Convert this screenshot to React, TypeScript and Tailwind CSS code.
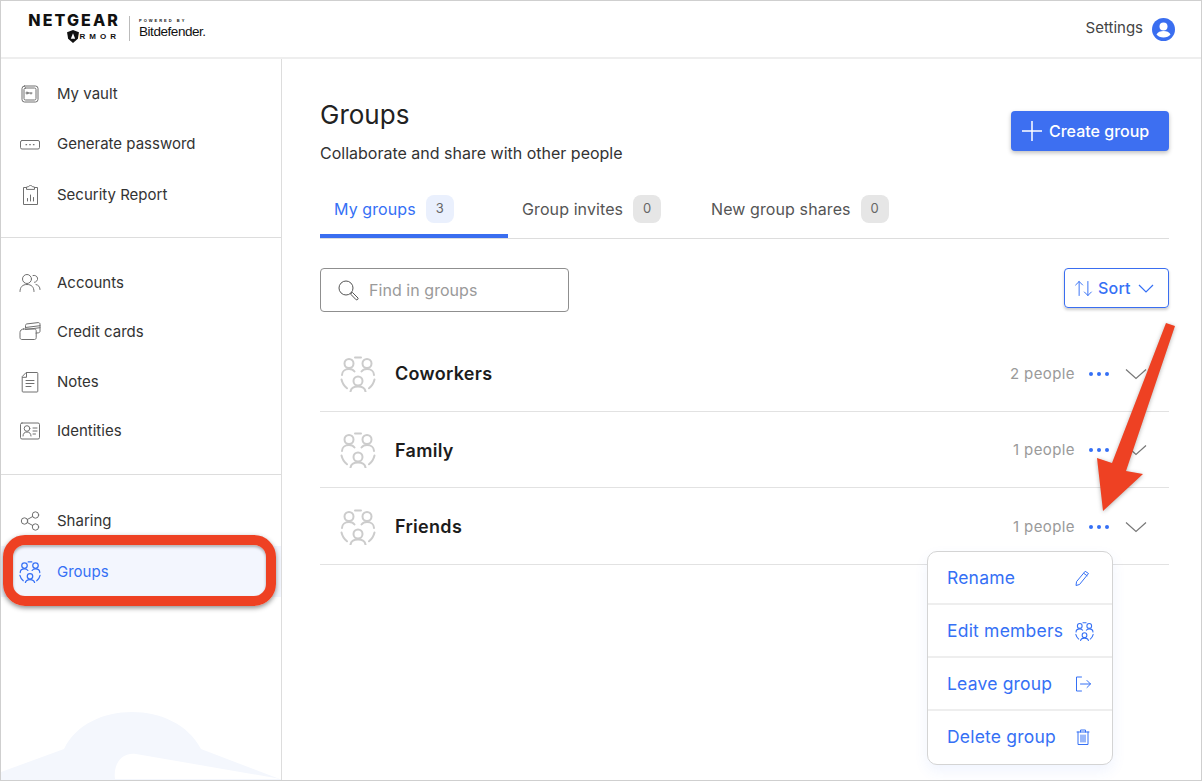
import type { ReactNode } from "react";
import { ArrowUpDown } from "lucide-react";

function Ico({ children, size = 22, view = 22, className = "" }: { children: ReactNode; size?: number; view?: number; className?: string }) {
  return (
    <svg width={size} height={size} viewBox={`0 0 ${view} ${view}`} fill="none" stroke="currentColor" strokeWidth="1" strokeLinecap="round" strokeLinejoin="round" className={`shrink-0 ${className}`}>
      {children}
    </svg>
  );
}

// three people in a broken ring, used in the sidebar, the list and the menu
function GroupIcon({ size = 22, className = "" }: { size?: number; className?: string }) {
  return (
    <svg width={size} height={size} viewBox="0 0 36 36" fill="none" stroke="currentColor" strokeWidth="2" strokeLinecap="round" className={`shrink-0 ${className}`}>
      <circle cx="9" cy="7.500" r="4.500" />
      <circle cx="27" cy="7.500" r="4.500" />
      <circle cx="18" cy="25" r="4.500" />
      <path d="M2 19c0-3.500 3-6 7-6 2.500 0 4.500 1 5.500 2.500" />
      <path d="M34 19c0-3.500-3-6-7-6-2.500 0-4.500 1-5.500 2.500" />
      <path d="M10.500 35.500c.5-3 3.500-5 7.500-5s7 2 7.500 5" />
      <path d="M15 1.500h6" />
      <path d="M1.500 23.500c.8 3.500 2.600 6.500 5.500 8.800" />
      <path d="M34.500 23.500c-.8 3.500-2.600 6.500-5.500 8.800" />
    </svg>
  );
}

const VaultIcon = () => (
  <Ico>
    <rect x="3" y="3" width="16" height="16" rx="2.500" />
    <rect x="5" y="5" width="12" height="12" rx="1.500" />
    <circle cx="8" cy="10" r="1" />
    <path d="M9 10h4M12 10v1" />
  </Ico>
);
const PasswordIcon = () => (
  <Ico>
    <rect x="1.500" y="6.500" width="19" height="8.500" rx="1.500" />
    <path d="M7 10.700h.6M10.700 10.700h.6M14.400 10.700h.6" strokeWidth="1.200" />
  </Ico>
);
const ReportIcon = () => (
  <Ico>
    <path d="M7.500 3.500H4.500v17h14v-17h-3" />
    <path d="M7.500 5V3l2-.3c.5-1.600 3.500-1.600 4 0l2 .3v2z" />
    <path d="M8.500 17v-2.500M11.500 17v-6M14.500 17v-3.500" />
  </Ico>
);
const AccountsIcon = () => (
  <Ico>
    <circle cx="8" cy="7" r="4.500" />
    <path d="M1 19.500c0-4.500 2.500-7 7-7s7 2.500 7 7" />
    <path d="M14 3.500a3.500 3.500 0 1 1 1.500 6.800" />
    <path d="M17 12.500c2.500.6 4 2.300 4 5" />
  </Ico>
);
const CardsIcon = () => (
  <Ico>
    <path d="M6.500 7V4.500c0-1 .6-1.500 1.500-1.600l11-1.300c1-.1 2 .5 2 1.500v7c0 1-.6 1.600-1.500 1.700l-2.500.3" />
    <path d="M6.500 6.500l14.500-1.800M6.500 8.500l14.500-1.800" />
    <path d="M4.500 8h11c1 0 1.700.7 1.700 1.700v7c0 1-.7 1.800-1.700 1.800H2.800c-1 0-1.800-.8-1.800-1.800v-5.200C1 9.500 2.500 8 4.500 8z" />
  </Ico>
);
const NotesIcon = () => (
  <Ico>
    <path d="M7.500 1.500h10.500a.8.8 0 0 1 .8.8v17.900a.8.8 0 0 1-.8.8H4a.8.8 0 0 1-.8-.8V6z" />
    <path d="M7.500 2v4.300H3.500" />
    <path d="M7 9.500h8M7 12.500h8M7 15.500h5" />
  </Ico>
);
const IdentityIcon = () => (
  <Ico>
    <rect x="1.500" y="3" width="19" height="16" rx="1.500" />
    <circle cx="8" cy="8.500" r="2.800" />
    <path d="M4 16c0-2.500 1.500-4 4-4s4 1.500 4 4" />
    <path d="M14 8h4M14 11h4M14 14h2.500" />
  </Ico>
);
const ShareIcon = () => (
  <Ico>
    <circle cx="5.500" cy="11" r="3.200" />
    <circle cx="16.500" cy="5" r="3.200" />
    <circle cx="16.500" cy="17" r="3.200" />
    <path d="M8.300 9.500l5.400-3M8.300 12.500l5.400 3" />
  </Ico>
);

function NavRow({ icon, label, active = false, h = "h-[50px]" }: { icon: ReactNode; label: string; active?: boolean; h?: string }) {
  return (
    <div className={`flex items-center pl-[18px] text-[15px] ${h} ${active ? "bg-[#f3f6fe] pt-[1px] text-[#3570f5]" : "text-[#333333]"}`}>
      <span className={`mr-[16px] ${active ? "" : "text-[#707070]"}`}>{icon}</span>
      {label}
    </div>
  );
}

function Sidebar() {
  return (
    <aside className="relative flex w-[281px] shrink-0 flex-col overflow-hidden border-r border-[#dddddd]">
      <div className="border-b border-[#dddddd] pt-[10px] pb-[17px]">
        <NavRow icon={<VaultIcon />} label="My vault" />
        <NavRow icon={<PasswordIcon />} label="Generate password" h="h-[51px]" />
        <NavRow icon={<ReportIcon />} label="Security Report" />
      </div>
      <div className="border-b border-[#dddddd] pt-[20px] pb-[18px]">
        <NavRow icon={<AccountsIcon />} label="Accounts" h="h-[49.5px]" />
        <NavRow icon={<CardsIcon />} label="Credit cards" h="h-[49.5px]" />
        <NavRow icon={<NotesIcon />} label="Notes" h="h-[49.5px]" />
        <NavRow icon={<IdentityIcon />} label="Identities" h="h-[49.5px]" />
      </div>
      <div className="pt-[21px]">
        <NavRow icon={<ShareIcon />} label="Sharing" />
        <NavRow icon={<GroupIcon />} label="Groups" active h="h-[51px]" />
      </div>
      {/* faded brand mark behind the bottom of the sidebar */}
      <svg className="absolute bottom-0 left-0" width="281" height="70" viewBox="0 0 281 70">
        <path d="M0 62L63 39C75 14 103 2 131 2s56 12 69 37l81 31H0z" fill="#f4f7fd" />
        <path d="M135 44L280 69H114c-2-14 6-27 21-25z" fill="#ffffff" />
      </svg>
    </aside>
  );
}

function Tab({ label, count, active = false, w }: { label: string; count: number; active?: boolean; w: string }) {
  return (
    <div className={`relative flex h-[56px] items-center pb-[2px] ${w}`}>
      <span className={`text-[16px] tracking-[0.1px] ${active ? "text-[#3570f5]" : "text-[#555555]"}`}>{label}</span>
      <span className={`ml-[10px] flex h-[28px] w-[28px] items-center justify-center rounded-lg text-[13px] text-[#666666] ${active ? "bg-[#eaf0fd]" : "bg-[#e6e6e6]"}`}>{count}</span>
      {active && <span className="absolute right-0 bottom-0 left-0 h-[4px] bg-[#3a6ef0]" />}
    </div>
  );
}

function GroupRow({ name, count }: { name: string; count: number }) {
  return (
    <div className="flex h-[76.5px] items-center border-b border-[#e2e2e2] pt-[2px] pr-[22px] pl-[20px]">
      <GroupIcon size={36} className="text-[#cccccc]" />
      <span className="ml-[19px] flex-1 text-[18px] font-semibold tracking-[0.3px] text-[#1c1c1c]">{name}</span>
      <span className="text-[15px] tracking-[0.4px] text-[#9a9a9a]">{count} people</span>
      <span className="mr-[16px] ml-[14px] flex gap-[4px]">
        <i className="size-[4px] rounded-full bg-[#3570f5]" />
        <i className="size-[4px] rounded-full bg-[#3570f5]" />
        <i className="size-[4px] rounded-full bg-[#3570f5]" />
      </span>
      <svg width="22" height="12" viewBox="0 0 22 12" fill="none" stroke="#777777" strokeWidth="1.200">
        <path d="M1 1.500l10 9 10-9" />
      </svg>
    </div>
  );
}

function MenuItem({ label, icon, last = false }: { label: string; icon: ReactNode; last?: boolean }) {
  return (
    <div className={`flex h-[53px] items-center justify-between pr-[20px] pl-[19px] text-[17.5px] tracking-[0.2px] text-[#3570f5] ${last ? "pb-[1px]" : "border-b-2 border-[#eeeeee] pt-[1px]"}`}>
      {label}
      {icon}
    </div>
  );
}

function GroupMenu() {
  return (
    <div className="absolute top-[550px] left-[926px] w-[186px] rounded-[10px] border border-[#d4d4d4] bg-white shadow-[0_6px_14px_rgba(58,110,240,0.08)]">
      <MenuItem label="Rename" icon={
        <Ico size={16} view={16} className="mr-[2px]"><path d="M11.500 1.500l3 2-9 11-3.500 1 .5-3.500zM10 3.500l3 2.200" /></Ico>
      } />
      <MenuItem label="Edit members" icon={<GroupIcon size={19} className="-mr-[2px]" />} />
      <MenuItem label="Leave group" icon={
        <Ico size={18} view={18}><path d="M7.500 2H2.500v14h5M6.500 9h10M13 5.500L16.500 9 13 12.500" /></Ico>
      } />
      <MenuItem label="Delete group" last icon={
        <Ico size={18} view={18}><path d="M3 4h12M6.500 4V2h5v2M4 4v12.500h10V4M7 7v7M9 7v7M11 7v7" /></Ico>
      } />
    </div>
  );
}

export default function App() {
  return (
    <div className="relative flex h-[781px] w-[1202px] flex-col overflow-hidden border border-[#cfcfcf] bg-white font-['Inter',sans-serif]">
      <header className="flex h-[58px] shrink-0 items-center justify-between border-b-2 border-[#eeeeee] pr-[26px] pl-[28px]">
        <div className="-mt-[2px] flex items-center">
          <div className="flex w-[91px] flex-col items-end text-[#111111]">
            <span className="text-[16px] leading-[15px] font-extrabold tracking-[2.100px] whitespace-nowrap">NETGEAR</span>
            <span className="mt-[2px] flex items-center font-['Liberation_Sans',sans-serif] text-[8px] leading-[10px] font-bold tracking-[4px]">
              <svg width="12" height="13" viewBox="0 0 11 12" className="mr-[1px]"><path d="M5.500 0L11 2l-1 6-4.500 4L1 8 0 2z" fill="#111111" /><path d="M5.500 3L7.500 8h-4z" fill="#ffffff" /></svg>
              RMOR
            </span>
          </div>
          <i className="mx-[9px] h-[25px] w-px bg-[#bbbbbb]" />
          <div className="flex flex-col font-['Liberation_Sans',sans-serif] text-[#111111]">
            <span className="text-[4px] leading-[6px] font-bold tracking-[2px] whitespace-nowrap">POWERED BY</span>
            <span className="text-[13.500px] leading-[15px] tracking-[-0.45px]">Bitdefender.</span>
          </div>
        </div>
        <div className="flex items-center text-[15px] text-[#444444]">
          <span className="mb-[2px]">Settings</span>
          <svg className="ml-[9px]" width="23" height="23" viewBox="0 0 23 23">
            <circle cx="11.500" cy="11.500" r="11.500" fill="#3a6ef0" />
            <circle cx="11.500" cy="8.500" r="4" fill="#ffffff" />
            <path d="M4.500 16.500c1-2.500 4-3.500 7-3.500s6 1 7 3.500c-1.500 2-4 3-7 3s-5.500-1-7-3z" fill="#ffffff" />
          </svg>
        </div>
      </header>

      <div className="flex min-h-0 flex-1">
        <Sidebar />
        <main className="flex-1 pt-[37px] pr-[32px] pl-[38px]">
          <div className="flex items-start justify-between">
            <div>
              <h1 className="text-[26px] leading-[38px] text-[#222222]">Groups</h1>
              <p className="mt-[9px] text-[16px] leading-[20px] text-[#333333]">Collaborate and share with other people</p>
            </div>
            <button className="mt-[15px] flex h-[40px] w-[158px] items-center rounded bg-[#3d6ff1] pl-[11px] text-[16px] font-medium text-white shadow-[0_2px_4px_rgba(0,0,0,0.25)]">
              <svg width="20" height="20" viewBox="0 0 20 20" stroke="#ffffff" strokeWidth="1.500" className="mr-[7px]">
                <path d="M0 10h20M10 0v20" />
              </svg>
              Create group
            </button>
          </div>

          <div className="mt-[19px] flex border-b border-[#dddddd]">
            <Tab label="My groups" count={3} active w="w-[188px] pl-[14px]" />
            <Tab label="Group invites" count={0} w="w-[188px] pl-[14px]" />
            <Tab label="New group shares" count={0} w="pl-[15px]" />
          </div>

          <div className="mt-[29px] flex items-start justify-between">
            <div className="flex h-[44px] w-[249px] items-center rounded border border-[#8f8f8f] pl-[17px]">
              <svg width="21" height="21" viewBox="0 0 21 21" fill="none" stroke="#555555" strokeWidth="1">
                <circle cx="8" cy="8" r="7" />
                <path d="M13 13l1.500-.5 5.500 5.500c.5 1-.8 2.300-1.800 1.800L13 14.500z" />
              </svg>
              <span className="ml-[10px] text-[16px] tracking-[0.05px] text-[#9a9a9a]">Find in groups</span>
            </div>
            <div className="flex h-[40px] w-[105px] items-center rounded border border-[#3a6ef0] pl-[8px] text-[16px] font-medium tracking-[0.2px] text-[#3570f5] shadow-[0_2px_3px_rgba(0,0,0,0.2)]">
              <ArrowUpDown size={21} strokeWidth={1.100} className="mr-[4px]" />
              Sort
              <svg width="16" height="9" viewBox="0 0 16 9" fill="none" stroke="currentColor" strokeWidth="1.200" className="ml-[7px]">
                <path d="M1 1l7 7 7-7" />
              </svg>
            </div>
          </div>

          <div className="mt-[23px]">
            <GroupRow name="Coworkers" count={2} />
            <GroupRow name="Family" count={1} />
            <GroupRow name="Friends" count={1} />
          </div>
        </main>
      </div>

      <GroupMenu />

      {/* annotations drawn over the screenshot */}
      <div className="absolute top-[534px] left-[2px] h-[71px] w-[273px] rounded-[22px] border-[10px] border-[#ee4123] shadow-[0_2px_5px_rgba(0,0,0,0.45),inset_0_2px_3px_rgba(0,0,0,0.3)]" />
      <svg className="absolute top-0 left-0 drop-shadow-[0_1px_2px_rgba(0,0,0,0.3)]" width="1202" height="781" viewBox="0 0 1202 781" fill="#ee4123">
        <path d="M1165 322l9 3-49 145 17 3-40 37-6-53 15 5z" />
      </svg>
    </div>
  );
}
